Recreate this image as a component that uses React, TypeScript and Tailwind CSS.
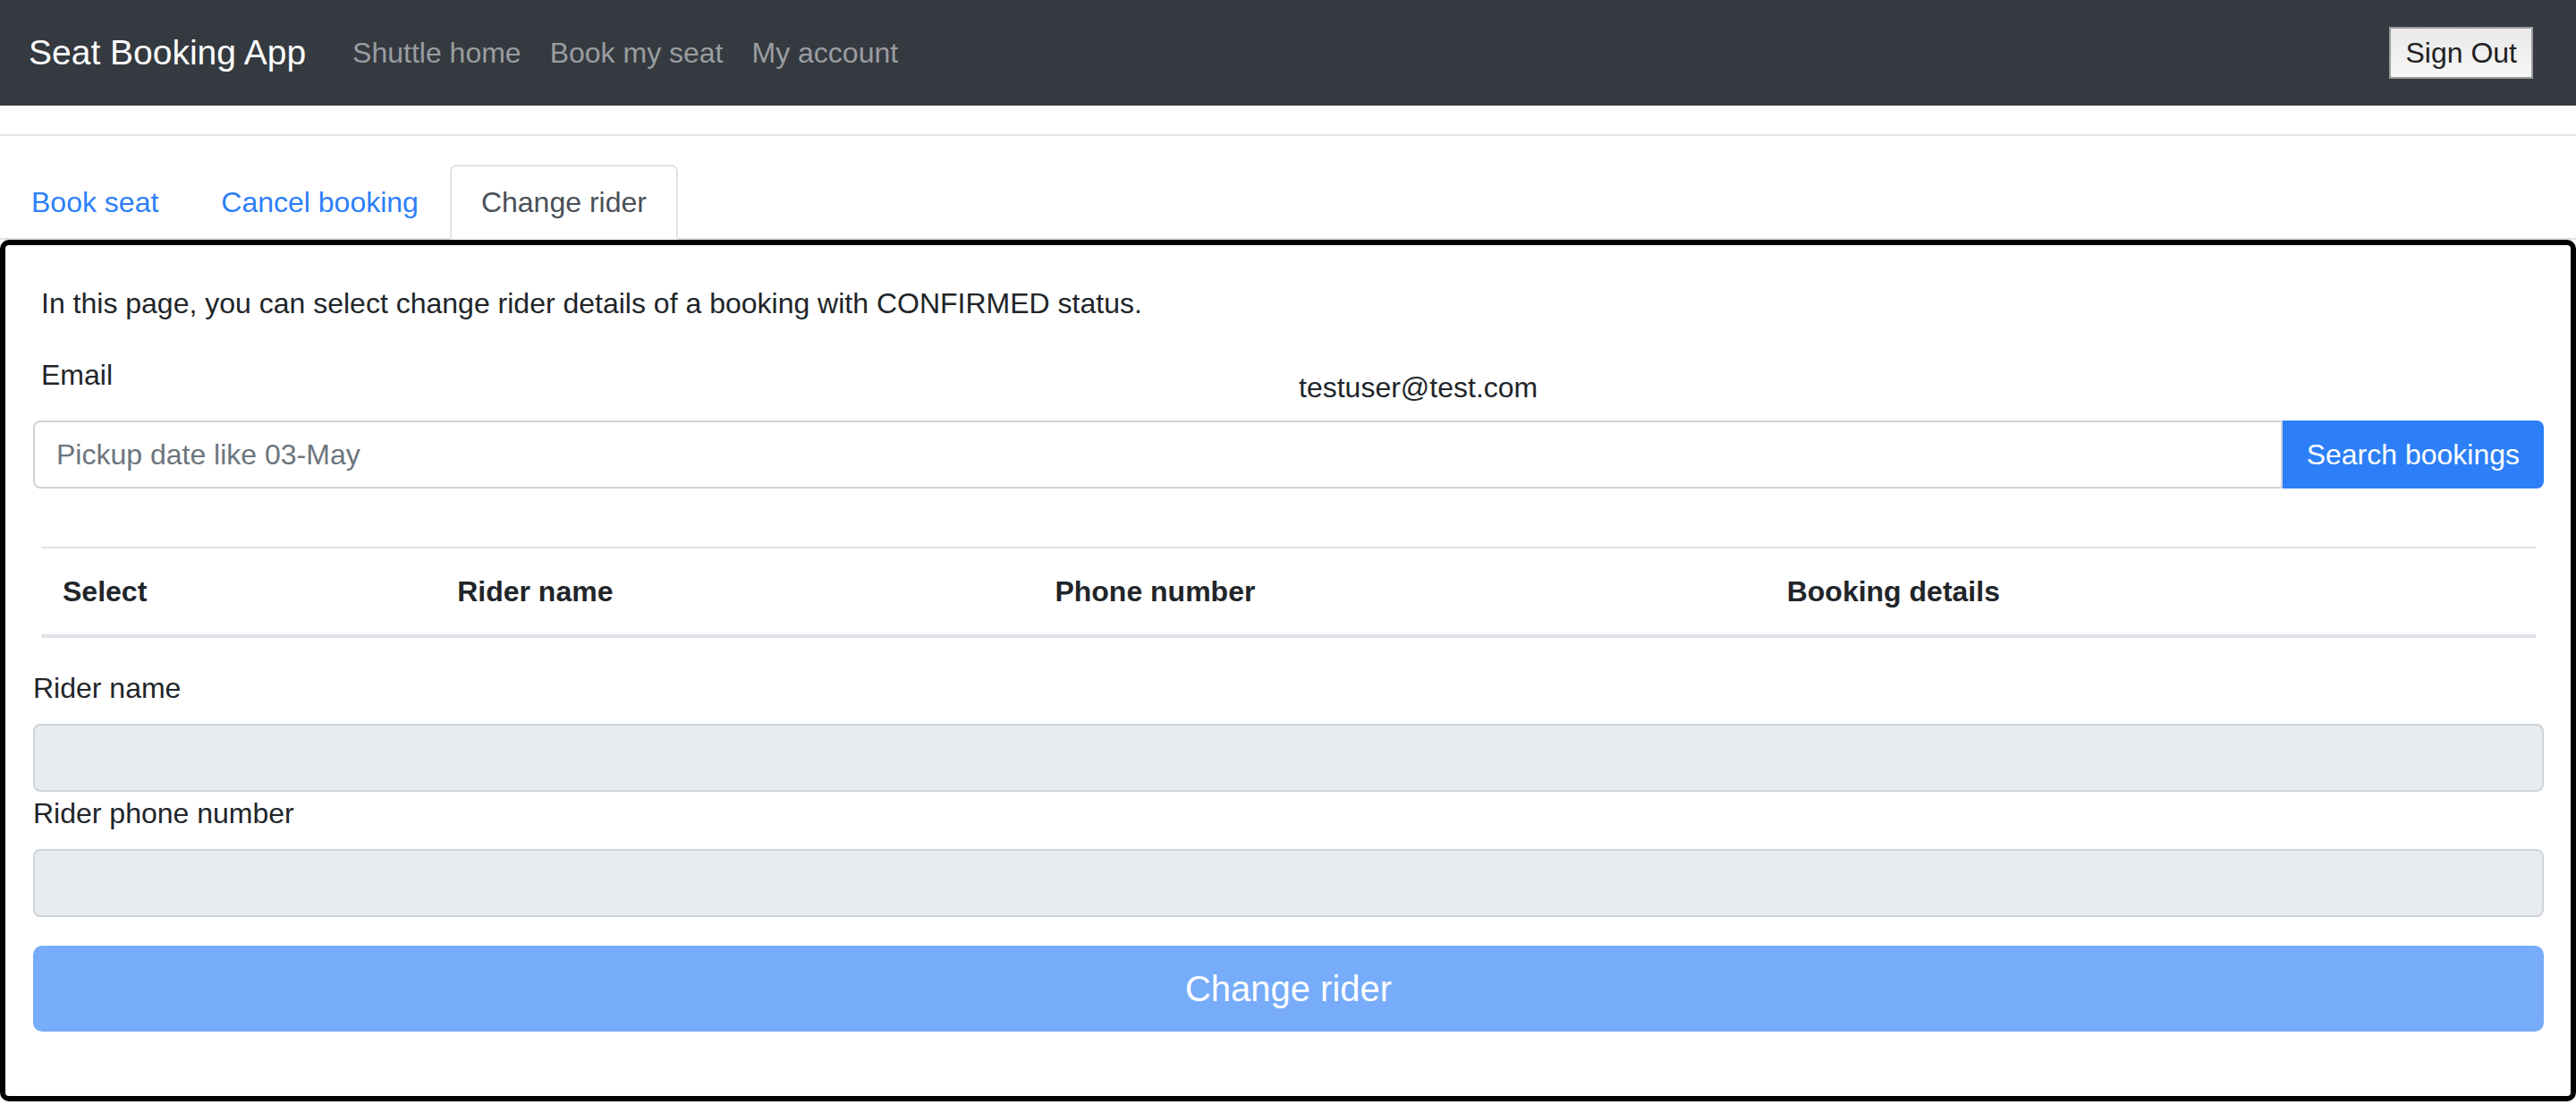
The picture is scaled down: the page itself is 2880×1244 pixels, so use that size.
import React from 'react';

const NavBar = () => {
  const links = ['Shuttle home', 'Book my seat', 'My account'];

  return (
    <nav className="h-[118px] bg-[#343a40] flex items-center px-8">
      <a className="text-[39px] leading-[60px] text-white mr-[36px] cursor-pointer">Seat Booking App</a>
      <ul className="flex">
        {links.map((link) => (
          <li key={link}>
            <a className="block px-4 text-[32px] leading-[48px] text-[#9a9da0] cursor-pointer">{link}</a>
          </li>
        ))}
      </ul>
      <button className="ml-auto mr-4 h-[58px] px-[16px] border-2 border-[#9c9c9c] bg-gradient-to-b from-[#e9e9e9] to-[#f6f6f6] text-[32px] leading-[40px] text-[#222]">
        Sign Out
      </button>
    </nav>
  );
};

const Tabs = () => {
  const tabs = [
    { label: 'Book seat', active: false },
    { label: 'Cancel booking', active: false },
    { label: 'Change rider', active: true },
  ];

  return (
    <div className="flex border-b-2 border-[#dee2e6]">
      {tabs.map((tab) => (
        <a
          key={tab.label}
          className={
            tab.active
              ? '-mb-[2px] px-[33px] py-4 border-2 border-[#dee2e6] border-b-white rounded-t-[8px] bg-white text-[#495057] cursor-pointer'
              : '-mb-[2px] px-[33px] py-4 border-2 border-transparent rounded-t-[8px] text-[#2d7ff8] cursor-pointer'
          }
        >
          {tab.label}
        </a>
      ))}
    </div>
  );
};

const ChangeRider = () => {
  const columns = [
    { title: 'Select', width: 'w-[441px]' },
    { title: 'Rider name', width: 'w-[668px]' },
    { title: 'Phone number', width: 'w-[818px]' },
    { title: 'Booking details', width: 'w-[861px]' },
  ];

  return (
    <div className="border-[6px] border-black rounded-[10px] pt-[41px] pb-[72px] pl-[31px] pr-[30px]">
      <p className="px-[9px] mb-8">
        In this page, you can select change rider details of a booking with CONFIRMED status.
      </p>

      {/* Email row */}
      <div className="flex px-[9px]">
        <label className="w-[1406px]">Email</label>
        <span className="mt-[14px]">testuser@test.com</span>
      </div>

      <div className="flex h-[76px] mt-[13px]">
        <input
          type="text"
          placeholder="Pickup date like 03-May"
          className="flex-1 min-w-0 border-2 border-[#ced4da] rounded-l-[8px] px-6 text-[32px] text-[#495057] placeholder:text-[#6c757d] outline-none"
        />
        <button className="bg-[#2d7ff8] text-white px-[27px] rounded-r-[8px] text-[32px]">Search bookings</button>
      </div>

      <div className="px-[9px] mt-[65px] mb-8">
        <table className="w-full table-fixed">
          <thead>
            <tr>
              {columns.map((col) => (
                <th
                  key={col.title}
                  className={`${col.width} text-left font-bold px-6 py-6 border-t-2 border-b-4 border-[#dee2e6]`}
                >
                  {col.title}
                </th>
              ))}
            </tr>
          </thead>
          <tbody></tbody>
        </table>
      </div>

      <label className="block mb-4">Rider name</label>
      <input
        type="text"
        disabled
        className="block w-full h-[76px] bg-[#e9ecef] border-2 border-[#ced4da] rounded-[8px] px-6"
      />
      <label className="block mb-4">Rider phone number</label>
      <input
        type="text"
        disabled
        className="block w-full h-[76px] bg-[#e9ecef] border-2 border-[#ced4da] rounded-[8px] px-6"
      />

      <button
        disabled
        className="mt-8 w-full h-[96px] bg-[#76acfa] text-white text-[40px] rounded-[10px]"
      >
        Change rider
      </button>
    </div>
  );
};

const App = () => {
  return (
    <div className="min-h-screen bg-white font-['Liberation_Sans',Arial,sans-serif] text-[#212529] text-[32px] leading-[48px]">
      <NavBar />
      <hr className="my-8 border-0 border-t-2 border-[#e6e6e6]" />
      <Tabs />
      <ChangeRider />
    </div>
  );
};

export default App;
